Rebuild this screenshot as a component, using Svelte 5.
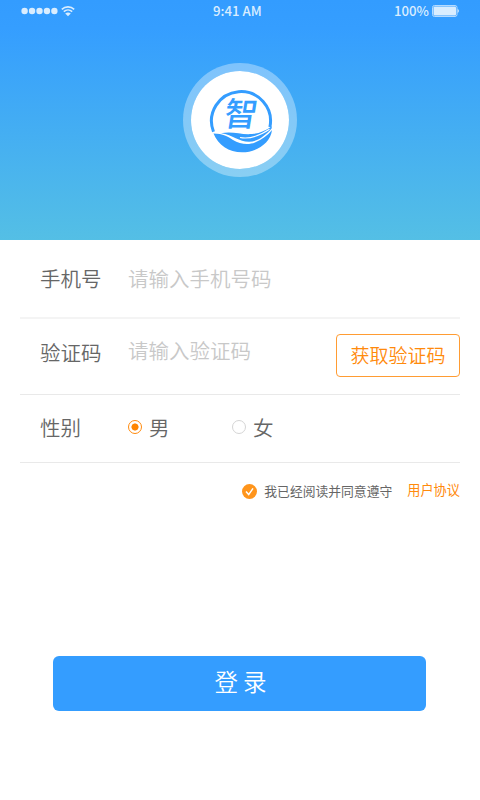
<!-- Register.svelte -->
<script>
    let phone = $state('');
    let code = $state('');
    let gender = $state('male');
    let agreed = $state(true);

    const signal = [0, 1, 2, 3, 4];
    const genders = [
        { value: 'male', label: '男' },
        { value: 'female', label: '女' },
    ];
</script>

<div class="page">
    <header class="hero">
        <div class="status-bar">
            <div class="status-left">
                <svg class="signal" width="37" height="8" viewBox="0 0 37 8">
                    {#each signal as i}
                        <circle cx={3.6 + i * 7.45} cy="4" r="3.2" />
                    {/each}
                </svg>
                <svg class="wifi" width="14" height="11" viewBox="0 0 14 11">
                    <path d="M.8 3.3C4.3 0 9.7 0 13.2 3.3" />
                    <path d="M2.8 5.7c2.4-2.2 6-2.2 8.4 0" />
                    <path class="fill" d="M4.2 7.5Q7 5.3 9.8 7.5L7 10.3z" />
                </svg>
            </div>
            <span class="time">9:41 AM</span>
            <div class="status-right">
                <span>100%</span>
                <svg width="28" height="12" viewBox="0 0 28 12">
                    <rect class="shell" x=".5" y=".5" width="24.5" height="11" rx="2" />
                    <rect class="charge" x="1.5" y="1.5" width="22.5" height="9" rx="1" />
                    <path class="charge" d="M25.6 3.8q2.6 2.2 0 4.4z" />
                </svg>
            </div>
        </div>

        <div class="logo">
            <svg width="70" height="70" viewBox="0 0 70 70">
                <path class="ring" d="M8.5 46.7A29.5 29.5 0 1 1 64.9 42" />
                <text class="mark" transform="translate(17.8 41.2) skewX(-9)">智</text>
                <path class="wave" d="M8.5 48.5C18 48.5 23 51.5 28 55C35 59.5 44 60 50 57.5C57 54.5 63 50 67 45C65.5 58.5 51 67.3 37 67.3C24 67.3 13 60 8.5 48.5z" />
                <path class="wave" d="M16 48.2C28 46 36 50 47 49C54 48.4 60 46 66.8 41.2L66.6 43.5C60 51 52 56.8 44 56.8C34 56.8 28 49.8 16 48.2z" />
                <path class="gap" d="M35 52.5C45 54.5 55 50.5 64.5 44.2" />
            </svg>
        </div>
    </header>

    <main>
        <div class="row phone">
            <label for="phone">手机号</label>
            <input id="phone" type="tel" placeholder="请输入手机号码" bind:value={phone} />
        </div>
        <div class="row code">
            <label for="code">验证码</label>
            <input id="code" type="text" placeholder="请输入验证码" bind:value={code} />
            <button class="get-code" type="button">获取验证码</button>
        </div>
        <div class="row gender">
            <span class="title">性别</span>
            {#each genders as item}
                <label class="option">
                    <input type="radio" name="gender" value={item.value} bind:group={gender} />
                    {item.label}
                </label>
            {/each}
        </div>

        <div class="agreement">
            <button class="check" class:off={!agreed} type="button" aria-label="同意" onclick={() => (agreed = !agreed)}>
                <svg width="15" height="15" viewBox="0 0 15 15">
                    <path d="M4 7.4l2.7 3.2L11 4.4" />
                </svg>
            </button>
            <span class="terms">我已经阅读并同意遵守</span>
            <a href="#agreement">用户协议</a>
        </div>

        <button class="login" type="button">登 录</button>
    </main>
</div>

<style>
    :global(body) {
        background: #fff;
    }
    .page {
        width: 480px;
        height: 800px;
        overflow: hidden;
        font-family: "Noto Sans CJK SC", sans-serif;
        font-weight: 350;
        color: #666;
    }
    .page * {
        box-sizing: border-box;
    }
    button,
    input {
        font-family: inherit;
        font-weight: inherit;
        margin: 0;
        padding: 0;
        border: 0;
        background: none;
    }
    .hero {
        height: 240px;
        background: linear-gradient(#339cff 0, #359eff 12%, #54bfe5 100%);
    }
    .status-bar {
        display: grid;
        grid-template-columns: 192px 1fr auto;
        align-items: center;
        height: 22px;
        padding: 0 20px 0 21px;
        font-size: 13.2px;
        font-weight: 500;
        line-height: 20px;
        color: #d9edff;
    }
    .status-left,
    .status-right {
        display: flex;
        align-items: center;
    }
    .status-left {
        gap: 3px;
    }
    .status-right {
        justify-content: flex-end;
        gap: 3px;
    }
    .signal,
    .wifi .fill,
    .charge {
        fill: #d9edff;
    }
    .wifi {
        fill: none;
        stroke: #d9edff;
        stroke-width: 1.6;
    }
    .wifi .fill {
        stroke: none;
    }
    .shell {
        fill: none;
        stroke: #b4daff;
    }
    .logo {
        display: flex;
        align-items: center;
        justify-content: center;
        width: 114px;
        height: 114px;
        margin: 41px auto 0;
        border: 8.5px solid rgba(255, 255, 255, 0.35);
        border-radius: 50%;
        background: #fff;
        background-clip: padding-box;
    }
    .logo svg {
        flex: none;
    }
    .ring {
        fill: none;
        stroke: #349dff;
        stroke-width: 3;
    }
    .mark {
        font-size: 33px;
        font-weight: 500;
        fill: #349dff;
    }
    .wave {
        fill: #349dff;
    }
    .gap {
        fill: none;
        stroke: #fff;
        stroke-width: 1.1;
    }
    main {
        padding: 0 20px;
    }
    .row {
        display: flex;
        align-items: center;
        padding-left: 20px;
        border-bottom: 1px solid #e9e9e9;
        font-size: 20.5px;
        line-height: 30px;
    }
    .row > label:first-child,
    .title {
        width: 88px;
    }
    .row input[type='tel'],
    .row input[type='text'] {
        flex: 1;
        min-width: 0;
        height: 30px;
        font-size: 20.5px;
        color: #666;
        outline: none;
    }
    .row input::placeholder {
        color: #c8c8c8;
        opacity: 1;
    }
    .phone {
        height: 79px;
        padding-bottom: 2px;
        border-bottom: 2px solid #f4f4f4;
    }
    .code {
        height: 76px;
        padding-bottom: 3px;
    }
    .code label {
        margin-bottom: 6px;
    }
    .code input {
        margin-bottom: 10px;
    }
    .get-code {
        width: 124px;
        height: 43px;
        padding-bottom: 2px;
        border: 1px solid #ff9c33;
        border-radius: 4px;
        font-size: 19px;
        color: #ff8a0c;
    }
    .gender {
        height: 68px;
        padding-bottom: 4px;
    }
    .option {
        display: flex;
        align-items: center;
        gap: 7px;
        width: 104px;
    }
    .option input {
        appearance: none;
        width: 14px;
        height: 14px;
        border: 1px solid #d5d5d5;
        border-radius: 50%;
    }
    .option input:checked {
        border-color: #ff8a0c;
        background: radial-gradient(circle, #ff8500 3.2px, transparent 3.9px);
    }
    .agreement {
        display: flex;
        align-items: center;
        justify-content: flex-end;
        height: 20px;
        margin-top: 18px;
        font-size: 12.8px;
        font-weight: 400;
        line-height: 20px;
    }
    .check {
        width: 15px;
        height: 15px;
        margin-right: 7px;
        border-radius: 50%;
        background: #ff951c;
    }
    .check.off {
        background: #d5d5d5;
    }
    .check svg {
        display: block;
        fill: none;
        stroke: #fff;
        stroke-width: 1.5;
    }
    .agreement a {
        margin: -2px 0 0 15px;
        font-size: 13.2px;
        color: #ff8a0c;
        text-decoration: none;
    }
    .login {
        display: block;
        width: 373px;
        height: 55px;
        margin: 155px 0 0 33px;
        padding: 0 0 6px 2px;
        border-radius: 6px;
        background: #349dff;
        font-size: 23.5px;
        font-weight: 350;
        color: #fff;
    }
</style>
